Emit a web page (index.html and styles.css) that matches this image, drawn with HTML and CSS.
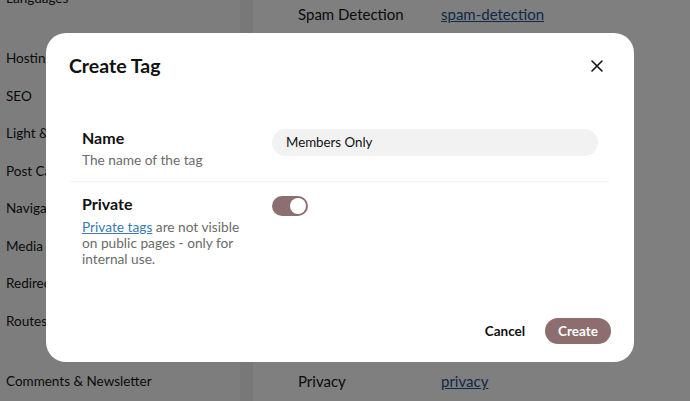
FILE: index.html
```html
<!DOCTYPE html>
<html lang="en">
<head>
  <meta charset="UTF-8" />
  <meta name="viewport" content="width=device-width, initial-scale=1.0"/>
  <title>Create Tag</title>
  <link rel="stylesheet" href="styles.css">
</head>
<body>

  <div class="page">
    <ul class="sidebar">
      <li class="first">Languages</li>
      <li>Hosting</li>
      <li>SEO</li>
      <li>Light &amp; Dark</li>
      <li>Post Cards</li>
      <li>Navigation</li>
      <li>Media</li>
      <li>Redirects</li>
      <li>Routes</li>
      <li class="gap">Comments &amp; Newsletter</li>
    </ul>
    <div class="divider-band"></div>
    <div class="content">
      <div class="row"><span class="name">Spam Detection</span><a href="#">spam-detection</a></div>
      <div class="spacer"></div>
      <div class="row"><span class="name">Privacy</span><a href="#">privacy</a></div>
    </div>
  </div>

  <div class="overlay">
    <div class="modal">
      <div class="modal-head">
        <h2>Create Tag</h2>
        <button class="close" aria-label="Close">
          <svg width="14" height="14" viewBox="0 0 14 14"><path d="M2 2L12 12M12 2L2 12" stroke="#111" stroke-width="1.6" stroke-linecap="round"/></svg>
        </button>
      </div>

      <div class="fields">
        <div class="field">
          <div class="label">
            <div class="label-title">Name</div>
            <div class="label-desc">The name of the tag</div>
          </div>
          <div class="input">Members Only</div>
        </div>
        <div class="field">
          <div class="label">
            <div class="label-title">Private</div>
            <div class="label-desc"><a href="#">Private tags</a> are not visible on public pages - only for internal use.</div>
          </div>
          <div class="toggle"><span class="knob"></span></div>
        </div>
      </div>

      <div class="modal-foot">
        <button class="cancel">Cancel</button>
        <button class="create">Create</button>
      </div>
    </div>
  </div>

</body>
</html>
```

FILE: styles.css
```css
* {
  box-sizing: border-box;
  margin: 0;
  padding: 0;
  font-family: Lato, 'Open Sans', sans-serif;
}

body {
  background: #fff;
  width: 690px;
  height: 401px;
  overflow: hidden;
}

/* page behind the dialog */
.page {
  display: flex;
  height: 401px;
}

.sidebar {
  list-style: none;
  width: 240px;
  background: #fafafa;
  padding-left: 6px;
  margin-top: -12px;
}

.sidebar li {
  font-size: 13.5px;
  color: #161616;
  height: 37.5px;
  line-height: 20px;
}

.sidebar li.first {
  height: 60px;
}

.sidebar li.gap {
  margin-top: 23px;
}

.divider-band {
  width: 13px;
  background: #f0f0f0;
}

.content {
  flex: 1;
  padding: 4px 0 0 45px;
  display: flex;
  flex-direction: column;
}

.content .row {
  display: flex;
  font-size: 15px;
  line-height: 20px;
  color: #161616;
}

.content .name {
  width: 143px;
}

.content a {
  color: #24508f;
}

.spacer {
  height: 347px;
}

/* dialog */
.overlay {
  position: fixed;
  inset: 0;
  background: rgba(0, 0, 0, 0.5);
  padding: 33px 0 0 46px;
}

.modal {
  width: 588px;
  height: 329px;
  background: #fff;
  border-radius: 20px;
  display: flex;
  flex-direction: column;
  padding: 0 23px 18px;
}

.modal-head {
  display: flex;
  justify-content: space-between;
  align-items: center;
  height: 64px;
}

.modal-head h2 {
  font-size: 19.5px;
  font-weight: 700;
  color: #111;
}

.close {
  background: none;
  border: none;
  width: 24px;
  height: 24px;
  display: flex;
  align-items: center;
  justify-content: center;
  margin-right: 2px;
  margin-top: 1px;
}

.fields {
  margin-top: 31px;
  padding: 0 2px 0 1px;
}

.field {
  display: grid;
  grid-template-columns: 190px 326px;
  padding: 0 0 0 12px;
  align-items: start;
}

.field + .field {
  border-top: 1px solid #f3f3f3;
  padding-top: 12px;
}

.field:first-child {
  height: 53px;
}

.label-title {
  font-size: 16px;
  font-weight: 700;
  color: #111;
  line-height: 20px;
}

.label-desc {
  font-size: 13.7px;
  color: #6b6b6b;
  line-height: 16px;
  margin-top: 4px;
  width: 168px;
}

.field + .field .label-desc {
  margin-top: 5px;
}

.label-desc a {
  color: #3a7ab6;
}

.input {
  background: #f2f2f2;
  border-radius: 14px;
  height: 27px;
  line-height: 27px;
  padding-left: 14px;
  font-size: 13.3px;
  color: #111;
  margin-top: 1px;
}

.toggle {
  width: 36px;
  height: 20px;
  border-radius: 10px;
  background: #8c6f70;
  display: flex;
  justify-content: flex-end;
  align-items: center;
  padding-right: 2px;
  margin-top: 2px;
}

.knob {
  width: 16px;
  height: 16px;
  border-radius: 50%;
  background: #fff;
}

.modal-foot {
  margin-top: auto;
  display: flex;
  justify-content: flex-end;
  align-items: center;
  gap: 20px;
}

.cancel {
  background: none;
  border: none;
  font-size: 13.5px;
  font-weight: 700;
  color: #111;
}

.create {
  background: #8c6e6e;
  color: #fff;
  border: none;
  border-radius: 13px;
  height: 26px;
  padding: 0 13px;
  font-size: 13.5px;
  font-weight: 700;
}
```
